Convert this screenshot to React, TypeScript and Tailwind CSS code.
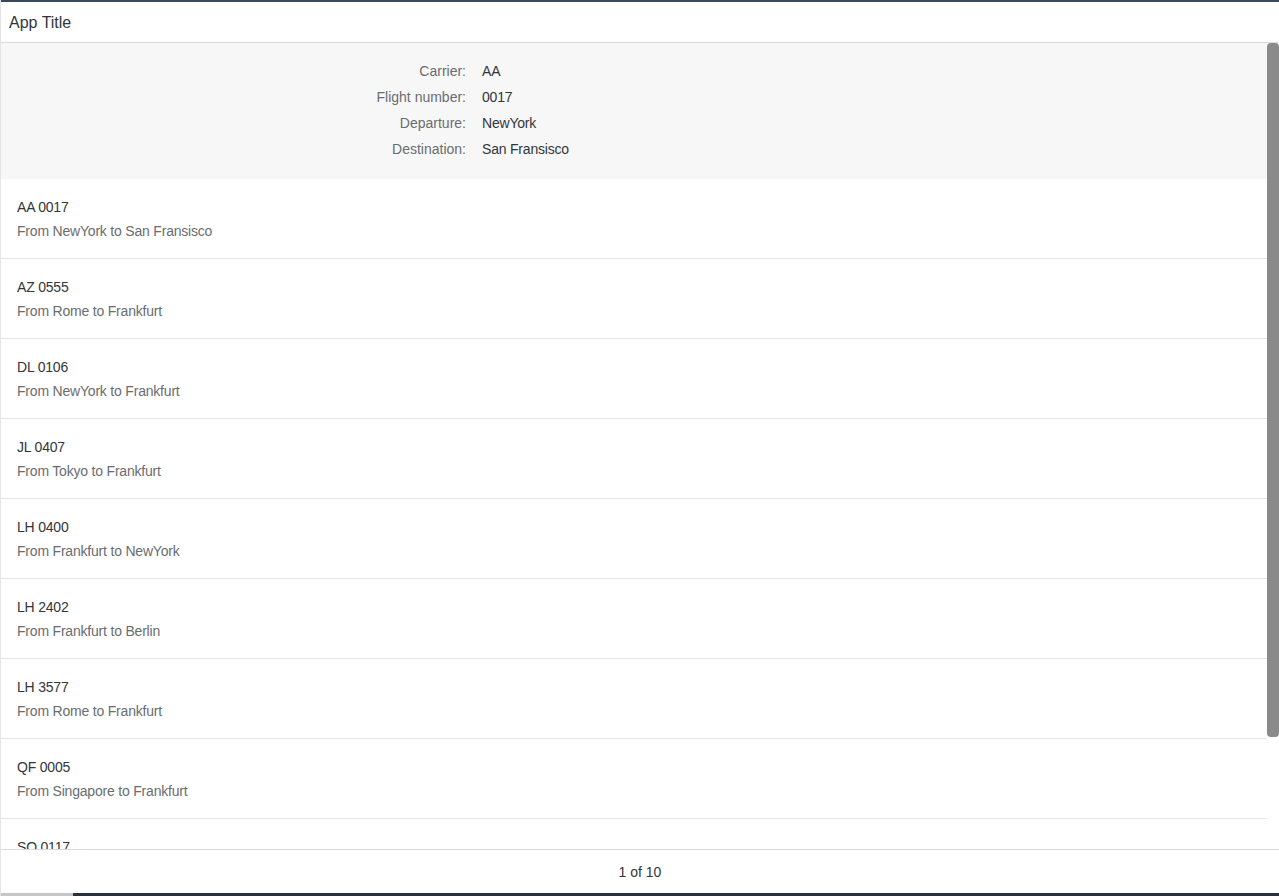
import React from "react";

const fields = [
  { label: "Carrier:", value: "AA" },
  { label: "Flight number:", value: "0017" },
  { label: "Departure:", value: "NewYork" },
  { label: "Destination:", value: "San Fransisco" },
];

const flights = [
  { id: "AA 0017", route: "From NewYork to San Fransisco" },
  { id: "AZ 0555", route: "From Rome to Frankfurt" },
  { id: "DL 0106", route: "From NewYork to Frankfurt" },
  { id: "JL 0407", route: "From Tokyo to Frankfurt" },
  { id: "LH 0400", route: "From Frankfurt to NewYork" },
  { id: "LH 2402", route: "From Frankfurt to Berlin" },
  { id: "LH 3577", route: "From Rome to Frankfurt" },
  { id: "QF 0005", route: "From Singapore to Frankfurt" },
  { id: "SQ 0117", route: "From Singapore to San Fransisco" },
  { id: "UA 3517", route: "From Singapore to Frankfurt" },
];

const App = () => {
  return (
    <div className="h-[896px] flex flex-col bg-white text-[#32363a] font-['Liberation_Sans',Arial,sans-serif] text-[14px] border-l border-[#e5e5e5]">
      <div className="h-[2px] bg-[#354a5f]" />
      <header className="h-[41px] flex items-center px-[8px] pt-[1px] border-b border-[#d9d9d9] text-[16px] shadow-[0_1px_1px_rgba(0,0,0,0.05)]">
        App Title
      </header>

      <div className="flex-1 min-h-0 flex">
        <div className="flex-1 overflow-hidden">
          <div className="bg-[#f7f7f7] pt-[15px] pb-[17px] grid grid-cols-[465px_1fr]">
            {fields.map((f) => (
              <React.Fragment key={f.label}>
                <div className="h-[26px] flex items-center justify-end text-[#6a6d70]">
                  {f.label}
                </div>
                <div className="h-[26px] flex items-center pl-[16px] tracking-[-0.2px]">{f.value}</div>
              </React.Fragment>
            ))}
          </div>

          <ul>
            {flights.map((f) => (
              <li
                key={f.id}
                className="h-[80px] pl-[16px] pt-[19px] border-b border-[#e5e5e5] flex flex-col gap-[6px] tracking-[-0.2px]"
              >
                <div className="leading-[18px]">{f.id}</div>
                <div className="leading-[18px] text-[#6a6d70]">{f.route}</div>
              </li>
            ))}
          </ul>
        </div>
        <div className="w-[12px] bg-white">
          <div className="h-[694px] bg-[#8a8a8a] rounded-[4px]" />
        </div>
      </div>

      <footer className="h-[44px] border-t border-[#d9d9d9] flex items-center justify-center pt-[1px]">
        1 of 10
      </footer>
      <div className="h-[3px] flex">
        <div className="w-[72px] bg-[#c6c6c6]" />
        <div className="flex-1 bg-[#26323b]" />
      </div>
    </div>
  );
};

export default App;
